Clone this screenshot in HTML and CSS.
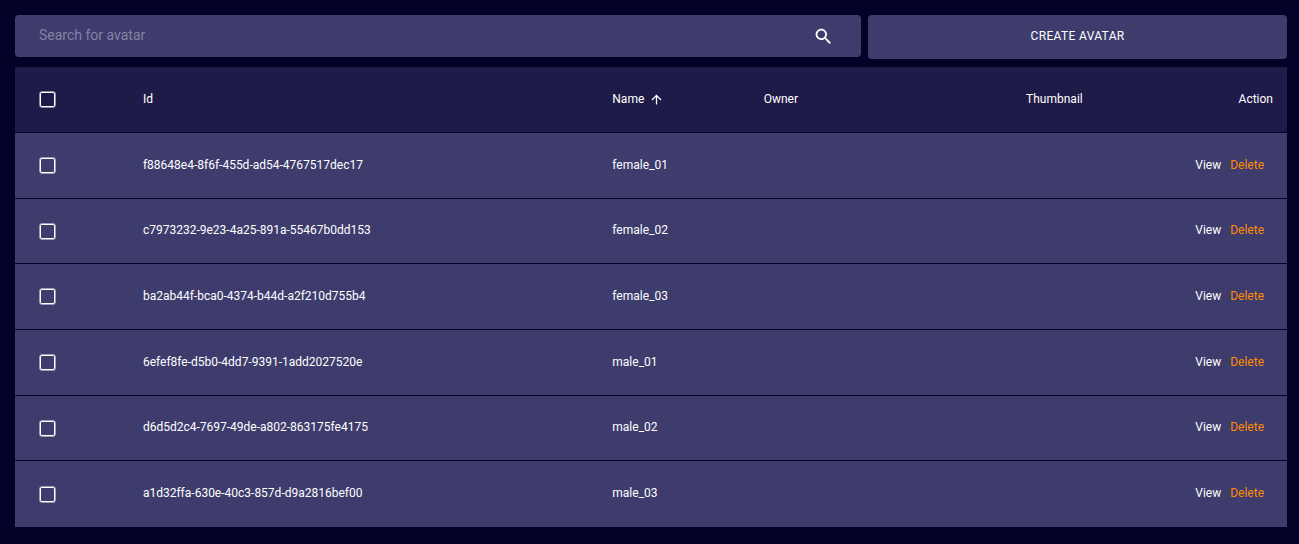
FILE: index.html
```html
<!DOCTYPE html>
<html lang="en">
<head>
<meta charset="utf-8">
<title>Avatars</title>
<link rel="stylesheet" href="styles.css">
</head>
<body>
<main class="page">
  <div class="toolbar">
    <form class="search" role="search">
      <input class="search-input" type="search" placeholder="Search for avatar" aria-label="Search for avatar">
      <button class="search-button" type="submit" aria-label="Search">
        <svg class="search-icon" viewBox="0 0 24 24" aria-hidden="true"><path d="M15.5 14h-.79l-.28-.27C15.41 12.59 16 11.11 16 9.5 16 5.91 13.09 3 9.5 3S3 5.91 3 9.5 5.91 16 9.5 16c1.61 0 3.09-.59 4.23-1.57l.27.28v.79l5 4.99L20.49 19l-4.99-5zm-6 0C7.01 14 5 11.99 5 9.5S7.01 5 9.5 5 14 7.01 14 9.5 11.99 14 9.5 14z"/></svg>
      </button>
    </form>
    <button class="create" type="button">Create Avatar</button>
  </div>
  <table class="avatars">
    <colgroup><col class="col-check"><col class="col-id"><col class="col-name"><col class="col-owner"><col class="col-thumb"><col class="col-action"></colgroup>
    <thead>
      <tr>
        <th class="check"><input class="box" type="checkbox" aria-label="Select all"></th>
        <th>Id</th>
        <th><button class="sort" type="button">Name<svg class="sort-icon" viewBox="0 0 24 24" aria-hidden="true"><path d="M4 12l1.41 1.41L11 7.83V20h2V7.83l5.58 5.59L20 12l-8-8-8 8z"/></svg></button></th>
        <th>Owner</th>
        <th class="right">Thumbnail</th>
        <th class="right">Action</th>
      </tr>
    </thead>
    <tbody>
      <tr><td class="check"><input class="box" type="checkbox" aria-label="Select female_01"></td><td>f88648e4-8f6f-455d-ad54-4767517dec17</td><td>female_01</td><td></td><td></td><td class="actions"><a class="view" href="#">View</a><a class="delete" href="#">Delete</a></td></tr>
      <tr><td class="check"><input class="box" type="checkbox" aria-label="Select female_02"></td><td>c7973232-9e23-4a25-891a-55467b0dd153</td><td>female_02</td><td></td><td></td><td class="actions"><a class="view" href="#">View</a><a class="delete" href="#">Delete</a></td></tr>
      <tr><td class="check"><input class="box" type="checkbox" aria-label="Select female_03"></td><td>ba2ab44f-bca0-4374-b44d-a2f210d755b4</td><td>female_03</td><td></td><td></td><td class="actions"><a class="view" href="#">View</a><a class="delete" href="#">Delete</a></td></tr>
      <tr><td class="check"><input class="box" type="checkbox" aria-label="Select male_01"></td><td>6efef8fe-d5b0-4dd7-9391-1add2027520e</td><td>male_01</td><td></td><td></td><td class="actions"><a class="view" href="#">View</a><a class="delete" href="#">Delete</a></td></tr>
      <tr><td class="check"><input class="box" type="checkbox" aria-label="Select male_02"></td><td>d6d5d2c4-7697-49de-a802-863175fe4175</td><td>male_02</td><td></td><td></td><td class="actions"><a class="view" href="#">View</a><a class="delete" href="#">Delete</a></td></tr>
      <tr><td class="check"><input class="box" type="checkbox" aria-label="Select male_03"></td><td>a1d32ffa-630e-40c3-857d-d9a2816bef00</td><td>male_03</td><td></td><td></td><td class="actions"><a class="view" href="#">View</a><a class="delete" href="#">Delete</a></td></tr>
    </tbody>
  </table>
</main>
</body>
</html>
```
FILE: styles.css
```css
* { box-sizing: border-box; }

body {
  margin: 0;
  background: #020229;
  color: #fff;
  font-family: Roboto, "Liberation Sans", sans-serif;
  font-size: 12px;
}

.page { padding: 15px 12px 15px 15px; }

.toolbar {
  display: grid;
  grid-template-columns: 2.02fr 1fr;
  align-items: start;
  gap: 7px;
  margin-bottom: 8px;
}

.search {
  display: flex;
  align-items: center;
  height: 42px;
  padding: 0 27px 0 24px;
  border-radius: 4px;
  background: #3d3c6d;
}

.search-input {
  flex: 1;
  min-width: 0;
  padding: 0 0 2px;
  border: 0;
  outline: 0;
  background: none;
  color: #fff;
  font: 14px/20px Roboto, "Liberation Sans", sans-serif;
}

.search-input::placeholder { color: #8482a4; }

.search-button {
  display: flex;
  padding: 0;
  border: 0;
  background: none;
  color: #fff;
}

.search-icon { width: 21px; height: 21px; fill: currentColor; }

.create {
  height: 44px;
  padding: 0 8px 3px;
  border: 0;
  border-radius: 4px;
  background: #3d3c6d;
  color: #fff;
  font: 12px/20px Roboto, "Liberation Sans", sans-serif;
  letter-spacing: 0.02857em;
  text-transform: uppercase;
}

.avatars {
  width: 100%;
  table-layout: fixed;
  border-collapse: separate;
  border-spacing: 0;
}

.col-check { width: 8.8%; }
.col-id { width: 36.9%; }
.col-name { width: 11.9%; }
.col-owner { width: 13%; }
.col-thumb { width: 14.6%; }
.col-action { width: 14.8%; }

.avatars th,
.avatars td {
  height: 66px;
  padding: 0 16px 2px;
  background: #3d3c6d;
  font-weight: 400;
  line-height: 18px;
  text-align: left;
  border-bottom: 1px solid #020229;
}

.avatars th { background: #1f1b48; }
.avatars tbody tr:nth-child(3n+2) td { height: 65px; }
.avatars tbody tr:last-child td { border-bottom: 0; }
.avatars .check { padding: 0 24px; }
.avatars .right { text-align: right; }
.avatars .right:last-child { padding-right: 14px; }
.avatars .actions { padding-right: 23px; text-align: right; white-space: nowrap; }

.box {
  display: block;
  width: 17px;
  height: 17px;
  margin: 0;
  appearance: none;
  border: 1px solid rgba(255, 255, 255, 0.5);
  border-radius: 3px;
  box-shadow: inset 0 0 0 1px #fff;
}

.box:checked { background: #fff; }

.sort {
  display: inline-flex;
  align-items: center;
  gap: 5px;
  padding: 0;
  border: 0;
  background: none;
  color: inherit;
  font: inherit;
}

.sort-icon { width: 15px; height: 15px; margin-top: 2px; fill: currentColor; }

.view { color: #fff; text-decoration: none; }
.delete { margin-left: 9px; color: #ff8c00; text-decoration: none; }
```
